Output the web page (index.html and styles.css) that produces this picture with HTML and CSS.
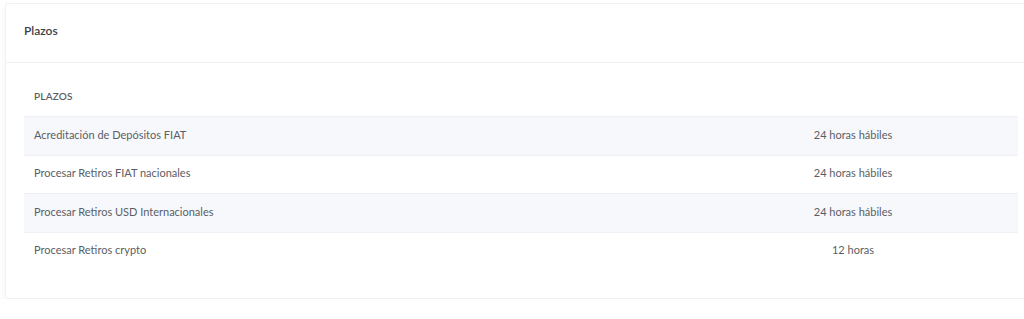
FILE: index.html
```html
<!DOCTYPE html>
<html lang="es">
<head>
    <meta charset="UTF-8">
    <meta name="viewport" content="width=device-width, initial-scale=1.0">
    <title>Plazos</title>
    <link rel="stylesheet" href="styles.css">
</head>
<body>
    <div class="card">
        <div class="card-header">Plazos</div>

        <div class="card-body">
            <div class="table">
                <div class="row head">
                    <div class="cell">PLAZOS</div>
                    <div class="cell value"></div>
                </div>
                <div class="row striped">
                    <div class="cell">Acreditación de Depósitos FIAT</div>
                    <div class="cell value">24 horas hábiles</div>
                </div>
                <div class="row">
                    <div class="cell">Procesar Retiros FIAT nacionales</div>
                    <div class="cell value">24 horas hábiles</div>
                </div>
                <div class="row striped">
                    <div class="cell">Procesar Retiros USD Internacionales</div>
                    <div class="cell value">24 horas hábiles</div>
                </div>
                <div class="row">
                    <div class="cell">Procesar Retiros crypto</div>
                    <div class="cell value">12 horas</div>
                </div>
            </div>
        </div>
    </div>
</body>
</html>
```

FILE: styles.css
```css
body {
    margin: 0;
    background-color: #ffffff;
    font-family: Lato, "Open Sans", Arial, sans-serif;
    color: #5a5e64;
    overflow: hidden;
}

.card {
    width: 1030px;
    margin: 3px 0 0 5px;
    background-color: #fff;
    border: 1px solid #f1f1f1;
    border-radius: 3px;
    box-shadow: 0 3px 8px rgba(0,0,0,0.05);
}

.card-header {
    height: 59px;
    box-sizing: border-box;
    display: flex;
    align-items: center;
    padding: 0 18px 6px 18px;
    font-size: 12px;
    font-weight: 600;
    color: #3c4046;
    border-bottom: 1px solid #f2f2f2;
}

.card-body {
    padding: 14px 18px 28px;
}

.table {
    display: flex;
    flex-direction: column;
}

.row {
    display: grid;
    grid-template-columns: 664px 1fr;
    height: 38.5px;
    align-items: center;
    border-top: 1px solid #eef0f5;
    box-sizing: border-box;
}

.row.head {
    border-top: none;
    height: 39px;
    font-weight: 600;
    letter-spacing: 0.2px;
}

.row.striped {
    background-color: #f7f8fc;
}

.cell {
    padding: 0 10px 3px;
    font-size: 11px;
}

.row.head .cell {
    font-size: 10px;
    padding-bottom: 2px;
}

.cell.value {
    text-align: center;
}
```
